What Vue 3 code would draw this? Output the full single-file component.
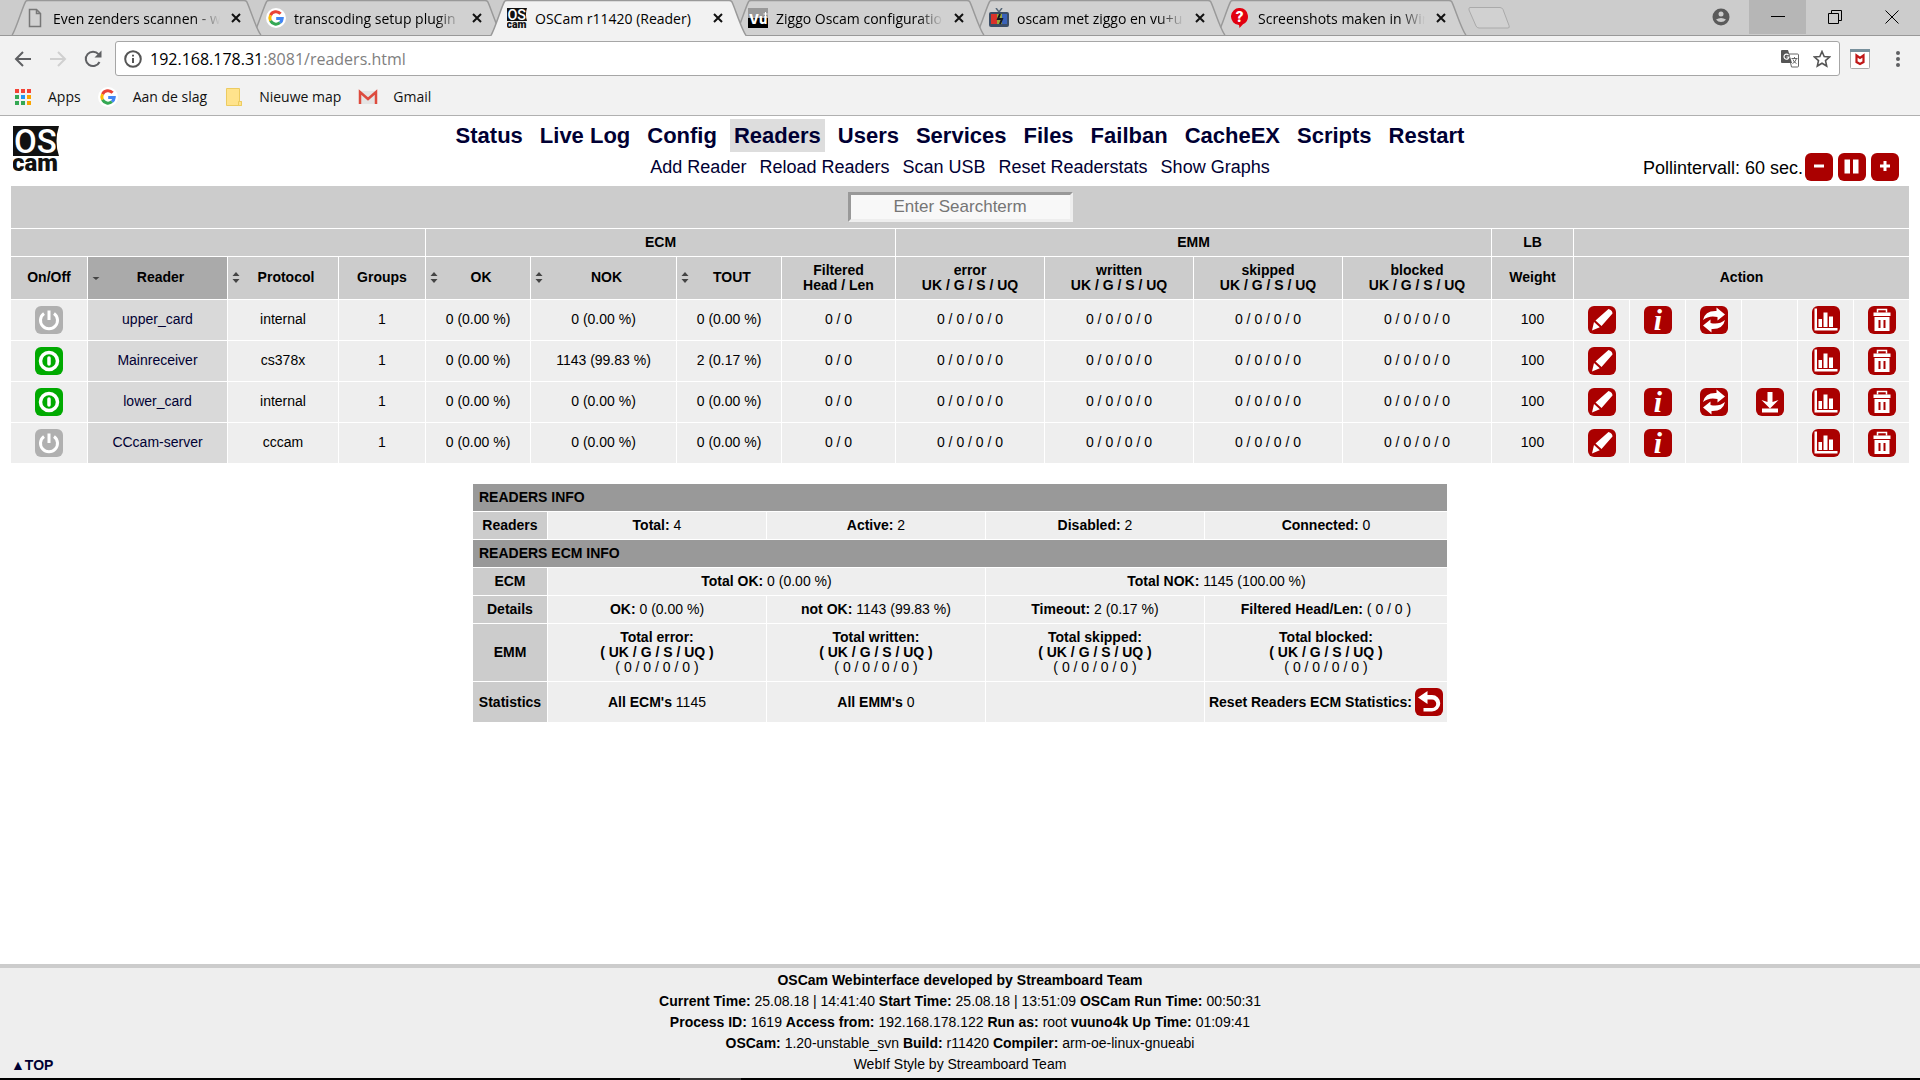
<template>
  <div class="screen">
    <svg class="sprite" aria-hidden="true">
      <symbol id="i-logo" viewBox="0 0 46 46">
        <path d="M0 0h46q-5 15 0 30H0z" fill="#111" />
        <text x="1" y="27" font-family="Roboto, sans-serif" font-weight="500" font-size="33" fill="#fff">OS</text>
        <text x="-1" y="45" font-family="Roboto, sans-serif" font-weight="900" font-size="24" fill="#111">cam</text>
      </symbol>
      <symbol id="i-page" viewBox="0 0 20 20">
        <path d="M4.500 1.500h7l4 4v13h-11zM11.500 1.500v4h4" fill="none" stroke="#777" stroke-width="1.500" />
      </symbol>
      <symbol id="i-google" viewBox="0 0 20 20">
        <circle cx="10" cy="10" r="10" fill="#fff" />
        <g fill="none" stroke-width="3">
          <path d="M14.600 5.800A6.200 6.200 0 0 0 4.500 7.200" stroke="#ea4335" />
          <path d="M4.500 7.200a6.200 6.200 0 0 0 0 5.600" stroke="#fbbc05" />
          <path d="M4.500 12.800a6.200 6.200 0 0 0 9.500 1.900" stroke="#34a853" />
          <path d="M14 14.700a6.200 6.200 0 0 0 2.200-4.200H10.200" stroke="#4285f4" />
        </g>
      </symbol>
      <symbol id="i-vu" viewBox="0 0 20 20">
        <path d="M0 0h20v10H0z" fill="#999" />
        <path d="M0 10h20v10H0z" fill="#000" />
        <text x="1" y="16" font-family="Inter, sans-serif" font-weight="800" font-size="13" fill="#fff">Vu</text>
        <path d="M17.500 4v4M15.500 6h4" stroke="#fff" />
      </symbol>
      <symbol id="i-tv" viewBox="0 0 20 20">
        <path d="M7 0l3 4 3-4" fill="none" stroke="#567" stroke-width="1.500" />
        <rect y="4" width="20" height="15" rx="2" fill="#3b4d66" />
        <path d="M2 6h6v10H2z" fill="#d8322a" />
        <path d="M8 6h5v10H8z" fill="#9aa83c" />
        <path d="M13 6h5v10h-5z" fill="#3a62b8" />
        <path d="M11 6l-2 5h4l-2 5" fill="none" stroke="#151a20" stroke-width="2" />
      </symbol>
      <symbol id="i-help" viewBox="0 0 20 20">
        <path d="M10 0a8.500 8.500 0 0 1 3 16.200L9.500 20 9 17A8.500 8.500 0 0 1 10 0z" fill="#e2000f" />
        <text x="5.500" y="14" font-family="Inter, sans-serif" font-weight="800" font-size="14" fill="#fff">?</text>
      </symbol>
      <symbol id="i-mail" viewBox="0 0 20 20">
        <path d="M1 4h18v13H1z" fill="#e4e4e4" />
        <path d="M2 17V5l8 7 8-7v12" fill="none" stroke="#dd4b3e" stroke-width="2.500" />
      </symbol>
      <symbol id="i-folder" viewBox="0 0 20 20">
        <path d="M2.500 1.500h13v13h2v4h-15z" fill="#ffe38c" stroke="#eccb60" />
        <path d="M14.500 18.500v-4h3v4z" fill="#ffe38c" stroke="#eccb60" />
      </symbol>
      <symbol id="i-apps" viewBox="0 0 20 20">
        <path d="M2 2h4v4H2zM8 2h4v4H8zM14 2h4v4h-4z" fill="#f44336" />
        <path d="M2 8h4v4H2zM2 14h4v4H2zM8 14h4v4H8z" fill="#34a853" />
        <path d="M8 8h4v4H8z" fill="#2196f3" />
        <path d="M14 8h4v4h-4zM14 14h4v4h-4z" fill="#fba400" />
      </symbol>

      <symbol id="i-edit" viewBox="0 0 28 28">
        <path d="M20.500 3q4 1 4 4.500L13.500 20l-6-5.500zM6 16l5.800 5.300-7.800 3.200z" fill="#fff" />
      </symbol>
      <symbol id="i-info" viewBox="0 0 28 28">
        <text x="14" y="24" text-anchor="middle" font-family="Liberation Serif, serif" font-weight="700" font-style="italic" font-size="30" fill="#fff">i</text>
      </symbol>
      <symbol id="i-restart" viewBox="0 0 28 28">
        <path d="M3 14Q5 4.500 16.500 5V1.500L25 8.500l-7.500 6V11Q9 9 3 14z" fill="#fff" />
        <path d="M25 14Q23 23.500 11.500 23v3.500L3 19.500l7.500-6V17q8.500 2 14.500-3z" fill="#fff" />
      </symbol>
      <symbol id="i-load" viewBox="0 0 28 28">
        <path d="M11.500 4h5v10l6-2L14 20.500 5.500 12l6 2zM6 20.500h16v4H6z" fill="#fff" />
      </symbol>
      <symbol id="i-stats" viewBox="0 0 28 28">
        <path d="M2.500 2.500H5V22h20.500v2.500h-23zM6.500 13H10v8H6.500zM11.500 6.500h4V21h-4zM17 10.500h4V21h-4z" fill="#fff" />
      </symbol>
      <symbol id="i-delete" viewBox="0 0 28 28">
        <path d="M9.500 6.500v-3h9v3" fill="none" stroke="#fff" stroke-width="1.500" />
        <path d="M5.500 6.500h17v3.500h-17zM6.500 11h15v14h-15z" fill="#fff" />
        <path d="M11.500 14v8M16.500 14v8" stroke="#a00" stroke-width="2" />
      </symbol>
      <symbol id="i-reset" viewBox="0 0 28 28">
        <path d="M3 9.500L12.500 3v4H17a8 8 0 0 1 0 16.500H8.500V20H17a4 4 0 0 0 0-8.500h-4.500V16z" fill="#fff" />
      </symbol>
      <symbol id="i-off" viewBox="0 0 28 28">
        <path d="M9 7.500a8.500 8.500 0 1 0 10 0M14 4.500V14" fill="none" stroke="#fff" stroke-width="3" />
      </symbol>
      <symbol id="i-on" viewBox="0 0 28 28">
        <circle cx="14" cy="14" r="8.500" fill="none" stroke="#fff" stroke-width="3.500" />
        <path d="M14 11v6" stroke="#fff" stroke-width="3.500" stroke-linecap="round" />
      </symbol>
      <symbol id="i-minus" viewBox="0 0 28 28">
        <path d="M9 13h10" stroke="#fff" stroke-width="3" />
      </symbol>
      <symbol id="i-pause" viewBox="0 0 28 28">
        <path d="M6.500 6.500h5.500v14H6.500zM15 6.500h5.500v14H15z" fill="#fff" />
      </symbol>
      <symbol id="i-plus" viewBox="0 0 28 28">
        <path d="M9 13h10M14 8v10" stroke="#fff" stroke-width="3" />
      </symbol>
    </svg>

    <!-- browser window -->
    <header class="browser">
      <div class="tabstrip">
        <div
          v-for="(tab, i) in tabs"
          :key="tab.title"
          class="tab"
          :class="['z' + i, { active: tab.active }]"
        >
          <svg class="tab-shape" viewBox="0 0 257 36" aria-hidden="true">
            <path d="M0.500 36C4 32 12 5 14.500 1.500Q15 .5 17 .5H239Q241 .5 242 2C245 8 252 31 256.500 36" />
          </svg>
          <svg class="fav" aria-hidden="true"><use :href="'#i-' + tab.icon" /></svg>
          <span class="tab-title">{{ tab.title }}</span>
          <button class="tab-close" aria-label="Close tab">
            <svg viewBox="0 0 10 10"><path d="M1 1l8 8M9 1l-8 8" /></svg>
          </button>
        </div>
        <button class="newtab" aria-label="New tab">
          <svg viewBox="0 0 44 22"><path d="M3 .5h30q2 0 3 2l6 16q1 2.500-1 2.500H12q-2 0-3-2l-7-16Q1.500.5 3 .5z" /></svg>
        </button>
        <div class="winctl">
          <button class="user" aria-label="Profile">
            <svg viewBox="0 0 18 18">
              <circle cx="9" cy="9" r="8.500" fill="#5a5a5a" />
              <circle cx="9" cy="6" r="2.500" fill="#ccc" />
              <path d="M4 11.500q5-3 10 0Q12 14 9 14t-5-2.500z" fill="#ccc" />
            </svg>
          </button>
          <button class="min" aria-label="Minimize"><svg viewBox="0 0 14 14"><path d="M0 6.500h14" /></svg></button>
          <button aria-label="Restore"><svg viewBox="0 0 14 14"><path d="M.5 3.500h10v10H.5zM3.500 3.500v-3h10v10h-3" /></svg></button>
          <button aria-label="Close"><svg viewBox="0 0 14 14"><path d="M.5.5l13 13M13.500.5l-13 13" /></svg></button>
        </div>
      </div>

      <div class="toolbar">
        <div class="nav-btns">
          <button class="nav-btn" aria-label="Back">
            <svg viewBox="0 0 20 20"><path d="M18 10H3M10 3l-7 7 7 7" /></svg>
          </button>
          <button class="nav-btn dim" aria-label="Forward">
            <svg viewBox="0 0 20 20"><path d="M2 10h15M10 3l7 7-7 7" /></svg>
          </button>
          <button class="nav-btn" aria-label="Reload">
            <svg viewBox="0 0 20 20"><path d="M16.500 13A7.200 7.200 0 1 1 15.500 5.200" /><path class="solid" d="M18.500 1.500v7h-7z" /></svg>
          </button>
        </div>
        <div class="omnibox">
          <svg class="site-info" viewBox="0 0 18 18" aria-hidden="true">
            <circle cx="9" cy="9" r="7.800" /><path d="M9 8v5M9 4.800v1.800" />
          </svg>
          <span class="url">192.168.178.31<i>:8081/readers.html</i></span>
          <svg class="omni-ico" viewBox="0 0 18 18" aria-hidden="true">
            <path d="M7.500 4h9q1 0 1 1v11q0 1-1 1h-6z" fill="#fff" stroke="#666" />
            <path d="M0 1q0-1 1-1h6l4 13H1q-1 0-1-1z" fill="#555" />
            <path d="M7.500 5.200A2.500 2.500 0 1 0 8 7H5.500" fill="none" stroke="#fff" stroke-width="1.200" />
            <path d="M10.500 8.500h6M13.500 7v1.500M15.500 8.500q-1 4-4 5M12 9.500q1 3 3.500 4" fill="none" stroke="#666" />
          </svg>
          <svg class="omni-ico" viewBox="0 0 18 18" aria-hidden="true">
            <path d="M9 1.500l2.200 5 5.300.5-4 3.600 1.200 5.400L9 13.200 4.300 16l1.200-5.400-4-3.600 5.300-.5z" fill="none" stroke="#555" stroke-width="1.600" />
          </svg>
        </div>
        <svg class="ext" viewBox="0 0 20 20" aria-hidden="true">
          <rect x=".5" y=".5" width="19" height="19" rx="1" fill="#fff" stroke="#aaa" />
          <path d="M0 0h20v3H0z" fill="#78909c" />
          <path d="M6.500 6.500L10 9l3.500-2.500v6.500L10 15l-3.500-2z" fill="none" stroke="#c01818" stroke-width="2.200" />
        </svg>
        <button class="dots" aria-label="Menu">
          <svg viewBox="0 0 4 18"><circle cx="2" cy="3" r="2" /><circle cx="2" cy="9" r="2" /><circle cx="2" cy="15" r="2" /></svg>
        </button>
      </div>

      <nav class="bookmarks">
        <a v-for="b in bookmarks" :key="b.label" href="#" class="bookmark">
          <svg aria-hidden="true"><use :href="'#i-' + b.icon" /></svg>{{ b.label }}
        </a>
      </nav>
    </header>

    <!-- OSCam web interface -->
    <main class="page">
      <div class="top">
        <svg class="logo" role="img" aria-label="OSCam"><use href="#i-logo" /></svg>
        <div class="menus">
          <nav class="menu">
            <a v-for="m in menu" :key="m" href="#" :class="{ selected: m === 'Readers' }">{{ m }}</a>
          </nav>
          <nav class="submenu">
            <a v-for="m in submenu" :key="m" href="#">{{ m }}</a>
          </nav>
        </div>
        <div class="poll">
          <span>Pollintervall: {{ poll }} sec.</span>
          <div class="poll-btns">
            <button class="icon" aria-label="Slower"><svg><use href="#i-minus" /></svg></button>
            <button class="icon" aria-label="Pause"><svg><use href="#i-pause" /></svg></button>
            <button class="icon" aria-label="Faster"><svg><use href="#i-plus" /></svg></button>
          </div>
        </div>
      </div>

      <table class="readers">
        <colgroup>
          <col class="c-onoff" /><col class="c-reader" /><col class="c-proto" /><col class="c-groups" />
          <col class="c-ok" /><col class="c-nok" /><col class="c-ok" /><col class="c-filt" />
          <col v-for="n in 4" :key="n" class="c-emm" />
          <col class="c-lb" />
          <col v-for="n in 6" :key="'a' + n" class="c-act" />
        </colgroup>
        <thead>
          <tr class="r-search">
            <th colspan="19"><input v-model="search" type="text" placeholder="Enter Searchterm" aria-label="Search" /></th>
          </tr>
          <tr class="r-group">
            <th colspan="4"></th>
            <th colspan="4">ECM</th>
            <th colspan="4">EMM</th>
            <th>LB</th>
            <th colspan="6"></th>
          </tr>
          <tr class="r-head">
            <th
              v-for="c in columns"
              :key="c.label"
              :colspan="c.span || 1"
              :class="{ sorted: c.sort === 'desc', two: c.sub }"
            >
              <button v-if="c.sort" class="sort">
                <svg viewBox="0 0 8 14" aria-hidden="true">
                  <path v-if="c.sort === 'both'" d="M0.500 6L4 2l3.500 4zM.5 9h7L4 13z" />
                  <path v-else d="M.5 7h7L4 10z" />
                </svg>
                <span>{{ c.label }}</span>
              </button>
              <template v-else>{{ c.label }}<br v-if="c.sub" />{{ c.sub }}</template>
            </th>
          </tr>
        </thead>
        <tbody>
          <tr v-for="r in readers" :key="r.name">
            <td class="btn">
              <button class="icon power" :class="{ on: r.on }" :aria-label="r.on ? 'Disable' : 'Enable'">
                <svg><use :href="r.on ? '#i-on' : '#i-off'" /></svg>
              </button>
            </td>
            <td class="name"><a href="#">{{ r.name }}</a></td>
            <td>{{ r.protocol }}</td>
            <td>1</td>
            <td>0 (0.00 %)</td>
            <td>{{ r.nok }}</td>
            <td>{{ r.tout }}</td>
            <td>0 / 0</td>
            <td v-for="n in 4" :key="n">0 / 0 / 0 / 0</td>
            <td>100</td>
            <td v-for="a in actions" :key="a" class="btn">
              <button v-if="r.actions.includes(a)" class="icon" :aria-label="a">
                <svg><use :href="'#i-' + a" /></svg>
              </button>
            </td>
          </tr>
        </tbody>
      </table>

      <table class="info">
        <colgroup>
          <col class="i-head" /><col class="i-cell" /><col class="i-cell" /><col class="i-cell" /><col class="i-last" />
        </colgroup>
        <tbody>
          <tr><th colspan="5" class="title">READERS INFO</th></tr>
          <tr>
            <th>Readers</th>
            <td><b>Total:</b> 4</td>
            <td><b>Active:</b> 2</td>
            <td><b>Disabled:</b> 2</td>
            <td><b>Connected:</b> 0</td>
          </tr>
          <tr><th colspan="5" class="title">READERS ECM INFO</th></tr>
          <tr>
            <th>ECM</th>
            <td colspan="2"><b>Total OK:</b> 0 (0.00 %)</td>
            <td colspan="2"><b>Total NOK:</b> 1145 (100.00 %)</td>
          </tr>
          <tr>
            <th>Details</th>
            <td><b>OK:</b> 0 (0.00 %)</td>
            <td><b>not OK:</b> 1143 (99.83 %)</td>
            <td><b>Timeout:</b> 2 (0.17 %)</td>
            <td><b>Filtered Head/Len:</b> ( 0 / 0 )</td>
          </tr>
          <tr class="r-emm">
            <th>EMM</th>
            <td v-for="e in emm" :key="e"><b>Total {{ e }}:<br />( UK / G / S / UQ )</b><br />( 0 / 0 / 0 / 0 )</td>
          </tr>
          <tr class="r-stat">
            <th>Statistics</th>
            <td><b>All ECM's</b> 1145</td>
            <td><b>All EMM's</b> 0</td>
            <td></td>
            <td>
              <div class="reset">
                <b>Reset Readers ECM Statistics:</b>
                <button class="icon" aria-label="Reset"><svg><use href="#i-reset" /></svg></button>
              </div>
            </td>
          </tr>
        </tbody>
      </table>
    </main>

    <footer class="foot">
      <a href="#" class="to-top">▲TOP</a>
      <p><b>OSCam Webinterface developed by Streamboard Team</b></p>
      <p v-for="(line, i) in footer" :key="i">
        <template v-for="[k, v] in line" :key="k"><b>{{ k }}</b>{{ ' ' + v + ' ' }}</template>
      </p>
      <p>WebIf Style by Streamboard Team</p>
    </footer>
    <div class="taskbar"><span></span></div>
  </div>
</template>

<script setup>
import { ref } from 'vue';

const search = ref('');
const poll = ref(60);

const tabs = [
  { title: 'Even zenders scannen - w', icon: 'page' },
  { title: 'transcoding setup plugin', icon: 'google' },
  { title: 'OSCam r11420 (Reader)', icon: 'logo', active: true },
  { title: 'Ziggo Oscam configuratio', icon: 'vu' },
  { title: 'oscam met ziggo en vu+u', icon: 'tv' },
  { title: 'Screenshots maken in Win', icon: 'help' },
];

const bookmarks = [
  { label: 'Apps', icon: 'apps' },
  { label: 'Aan de slag', icon: 'google' },
  { label: 'Nieuwe map', icon: 'folder' },
  { label: 'Gmail', icon: 'mail' },
];

const menu = ['Status', 'Live Log', 'Config', 'Readers', 'Users', 'Services', 'Files', 'Failban', 'CacheEX', 'Scripts', 'Restart'];
const submenu = ['Add Reader', 'Reload Readers', 'Scan USB', 'Reset Readerstats', 'Show Graphs'];

const columns = [
  { label: 'On/Off' },
  { label: 'Reader', sort: 'desc' },
  { label: 'Protocol', sort: 'both' },
  { label: 'Groups' },
  { label: 'OK', sort: 'both' },
  { label: 'NOK', sort: 'both' },
  { label: 'TOUT', sort: 'both' },
  { label: 'Filtered', sub: 'Head / Len' },
  { label: 'error', sub: 'UK / G / S / UQ' },
  { label: 'written', sub: 'UK / G / S / UQ' },
  { label: 'skipped', sub: 'UK / G / S / UQ' },
  { label: 'blocked', sub: 'UK / G / S / UQ' },
  { label: 'Weight' },
  { label: 'Action', span: 6 },
];

const actions = ['edit', 'info', 'restart', 'load', 'stats', 'delete'];
const readers = [
  { name: 'upper_card', protocol: 'internal', on: false, nok: '0 (0.00 %)', tout: '0 (0.00 %)', actions: ['edit', 'info', 'restart', 'stats', 'delete'] },
  { name: 'Mainreceiver', protocol: 'cs378x', on: true, nok: '1143 (99.83 %)', tout: '2 (0.17 %)', actions: ['edit', 'stats', 'delete'] },
  { name: 'lower_card', protocol: 'internal', on: true, nok: '0 (0.00 %)', tout: '0 (0.00 %)', actions: ['edit', 'info', 'restart', 'load', 'stats', 'delete'] },
  { name: 'CCcam-server', protocol: 'cccam', on: false, nok: '0 (0.00 %)', tout: '0 (0.00 %)', actions: ['edit', 'info', 'stats', 'delete'] },
];

const emm = ['error', 'written', 'skipped', 'blocked'];

const footer = [
  [['Current Time:', '25.08.18 | 14:41:40'], ['Start Time:', '25.08.18 | 13:51:09'], ['OSCam Run Time:', '00:50:31']],
  [['Process ID:', '1619'], ['Access from:', '192.168.178.122'], ['Run as:', 'root'], ['vuuno4k Up Time:', '01:09:41']],
  [['OSCam:', '1.20-unstable_svn'], ['Build:', 'r11420'], ['Compiler:', 'arm-oe-linux-gnueabi']],
];
</script>

<style>
body { background: #fff; }
</style>

<style scoped>
.screen {
  display: flex; flex-direction: column; min-height: 100vh;
  font-family: 'Liberation Sans', Arial, sans-serif; font-size: 14px; color: #000;
}
.sprite { display: none; }
button { padding: 0; border: 0; background: none; font: inherit; color: inherit; }
a { color: #003; text-decoration: none; }

/* browser window */
.browser {
  background: #f2f2f2; border-bottom: 1px solid #b0b0b0;
  font-family: 'Open Sans', 'Noto Sans', sans-serif;
}
.tabstrip {
  display: flex; height: 35px; padding-left: 8px;
  background: #ccc; border-bottom: 1px solid #999;
}
.tab {
  position: relative; flex: 0 0 241px; min-width: 0; box-sizing: border-box; height: 36px;
  display: flex; align-items: center; padding: 0 5px 0 17px;
  font-size: 14px;
}
.z0 { z-index: 6; }
.z1 { z-index: 5; }
.z2 { z-index: 7; }
.z3 { z-index: 4; }
.z4 { z-index: 3; }
.z5 { z-index: 2; }
.tab-shape { position: absolute; left: 0; top: 0; width: 257px; height: 36px; z-index: -1; }
.tab-shape path { fill: #d1d1d1; stroke: #999; stroke-width: 1.5; }
.tab:not(.active) .tab-shape { border-bottom: 1px solid #999; box-sizing: border-box; }
.tab.active .tab-shape path { fill: #f2f2f2; }
.fav { flex: none; width: 20px; height: 20px; }
.tab-title {
  flex: 1; min-width: 0; margin: 0 8px; overflow: hidden; white-space: nowrap;
  mask-image: linear-gradient(to right, #000 85%, transparent);
}
.active .tab-title { mask-image: none; }
.tab-close { flex: none; width: 16px; height: 16px; display: grid; place-items: center; }
.tab-close svg { width: 10px; height: 10px; }
.tab-close path { stroke: #111; stroke-width: 2; }
.newtab { margin: 0 0 0 13px; align-self: center; height: 22px; }
.newtab svg { display: block; width: 44px; height: 22px; fill: #d1d1d1; stroke: #aaa; }
.winctl { display: flex; margin-left: auto; height: 34px; }
.winctl button { width: 57px; display: grid; place-items: center; }
.winctl svg { width: 14px; height: 14px; fill: none; stroke: #000; }
.winctl .user svg { width: 18px; height: 18px; stroke: none; }
.winctl .min { background: #b6b6b6; }

.toolbar { display: flex; align-items: center; padding: 5px 20px 0 13px; }
.nav-btns { display: flex; gap: 15px; margin-right: 12px; }
.nav-btn { width: 20px; height: 20px; }
.nav-btn svg { display: block; width: 20px; height: 20px; fill: none; stroke: #5f6063; stroke-width: 2; }
.nav-btn .solid { fill: #5f6063; stroke: none; }
.nav-btn.dim svg { stroke: #d0d0d0; }
.omnibox {
  flex: 1; display: flex; align-items: center; gap: 14px; box-sizing: border-box; height: 35px;
  margin-right: 10px; padding: 0 8px;
  background: #fff; border: 1px solid #a6a6a6; border-radius: 3px;
}
.site-info { width: 18px; height: 18px; margin-right: -6px; fill: none; stroke: #555; stroke-width: 2; }
.url { flex: 1; font-size: 16px; }
.url i { font-style: normal; color: #808080; }
.omni-ico { width: 18px; height: 18px; }
.ext { width: 20px; height: 20px; margin-right: 26px; }
.dots { width: 4px; height: 18px; }
.dots svg { display: block; width: 4px; height: 18px; fill: #5f6063; }
.bookmarks { display: flex; gap: 17px; height: 37px; padding: 2px 13px 0; align-items: center; font-size: 14px; }
.bookmark { display: flex; align-items: center; gap: 15px; color: #111; }
.bookmark svg { width: 20px; height: 20px; }

/* page header */
.page { flex: 1; padding: 3px 11px 20px; }
.top { display: grid; grid-template-columns: 1fr auto 1fr; height: 67px; }
.logo { width: 46px; height: 46px; margin: 7px 0 0 2px; }
.menus { text-align: center; }
.menu { display: flex; justify-content: center; gap: 9px; font-size: 22px; font-weight: 700; line-height: 33px; }
.menu a { padding: 0 4px; }
.menu .selected { background: #ddd; }
.submenu { display: flex; justify-content: center; gap: 13px; font-size: 18px; line-height: 30px; }
.poll {
  display: flex; justify-content: flex-end; align-items: flex-end; gap: 2px;
  padding: 0 10px 5px; font-size: 18px; line-height: 26px;
}
.poll-btns { display: flex; gap: 5px; }
.icon {
  width: 28px; height: 28px; border-radius: 6px; background: #a00;
  display: inline-block; vertical-align: middle;
}
.icon svg { display: block; width: 28px; height: 28px; }
.power { background: #b0b0b0; }
.power.on { background: #0a0; }

/* tables */
table { border-collapse: separate; border-spacing: 1px; background: #fff; line-height: 15px; text-align: center; }
th, td { padding: 0; }
td { background: #eee; }
th { background: #ccc; }
.readers { width: calc(100% + 2px); margin: -1px -1px 0; table-layout: fixed; }
.c-onoff { width: 76px; }
.c-reader { width: 139px; }
.c-proto { width: 110px; }
.c-groups { width: 86px; }
.c-ok { width: 104px; }
.c-nok { width: 145px; }
.c-filt { width: 113px; }
.c-emm { width: 148px; }
.c-lb { width: 81px; }
.c-act { width: 55px; }
.r-search th { height: 42px; }
.r-search input {
  display: block; box-sizing: border-box; width: 225px; height: 30px; margin: 0 auto; padding: 0;
  border: 3px solid; border-color: #999 #eee #eee #999; background: #f8f8f8;
  font: 17px 'Liberation Sans', Arial, sans-serif; text-align: center;
}
.r-search input::placeholder { color: #757575; }
.r-group th { height: 27px; }
.r-head th { height: 40px; padding-bottom: 2px; }
.r-head .two { height: 42px; padding-bottom: 0; }
.r-head .sorted { background: #aaa; }
.readers tbody td { height: 38px; padding-bottom: 2px; }
.readers tbody .btn { height: 40px; padding-bottom: 0; }
.readers tbody .name { background: #d9d9d9; }
.sort { display: flex; align-items: center; width: 100%; box-sizing: border-box; padding: 0 6px 0 4px; }
.sort svg { width: 8px; height: 14px; fill: #444; }
.sort span { flex: 1; }

.info { width: 974px; margin: 19px auto 0; table-layout: fixed; }
.i-head { width: 74px; }
.i-cell { width: 218px; }
.i-last { width: 242px; }
.info th, .info td { height: 27px; }
.info .title { background: #999; text-align: left; padding-left: 6px; }
.info .r-emm td { height: 57px; }
.info .r-stat td { height: 40px; }
.reset { display: flex; align-items: center; justify-content: center; gap: 3px; white-space: nowrap; }

/* footer */
.foot {
  position: relative; padding: 2px 11px 3px; background: #eee; border-top: 4px solid #ccc;
  text-align: center; line-height: 21px;
}
.foot p { margin: 0; }
.to-top { position: absolute; left: 11px; bottom: 2px; font-weight: 700; }
.taskbar { display: flex; height: 2px; background: #000; padding-left: 680px; }
.taskbar span { width: 61px; background: #333; }
</style>
